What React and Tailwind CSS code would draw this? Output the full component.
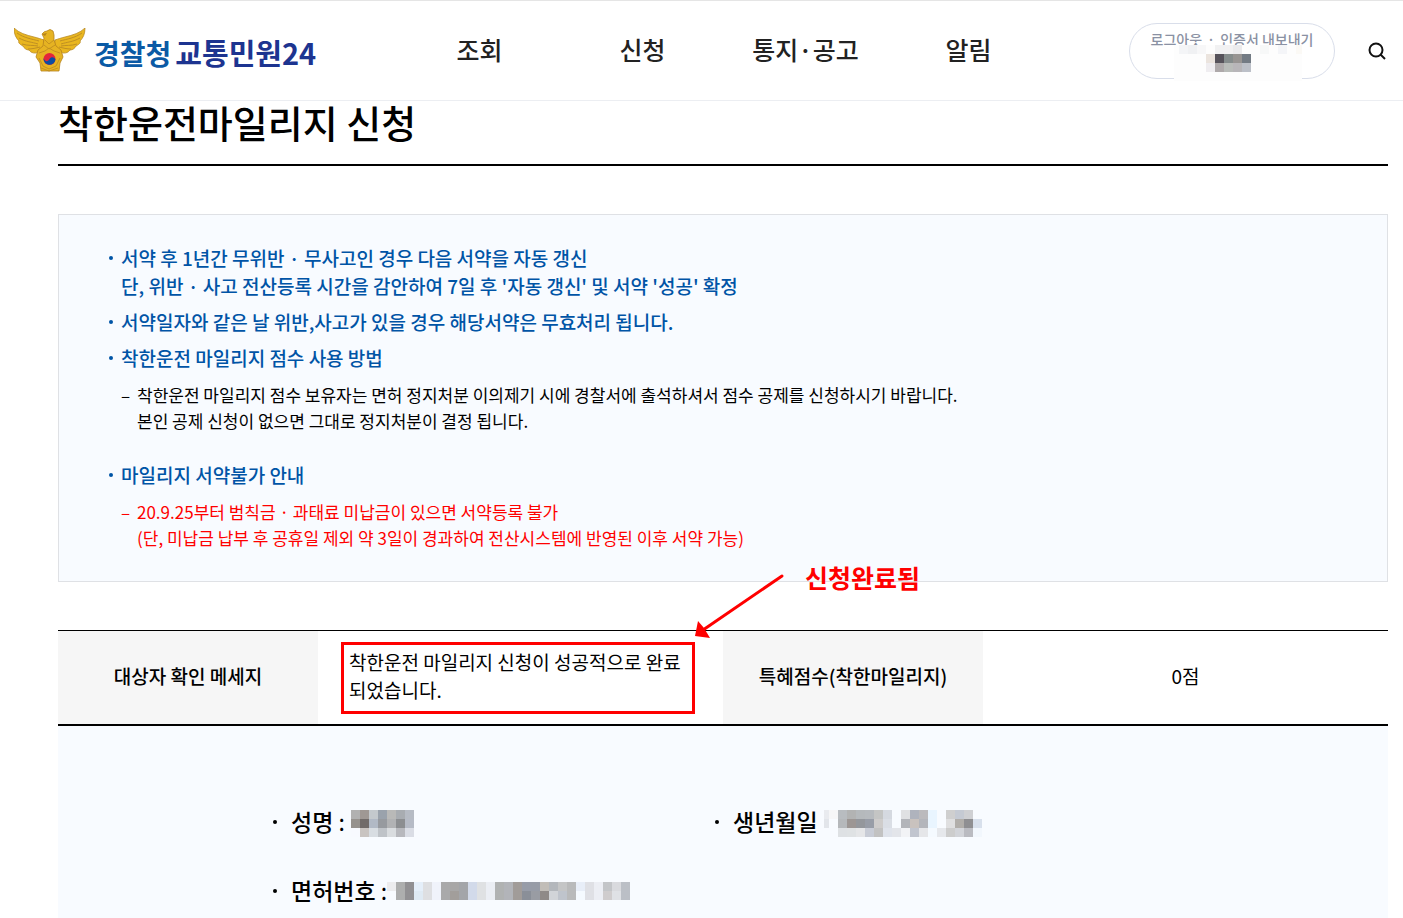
import React from 'react';

const MENU = ['조회', '신청', '통지·공고', '알림'];

// Colours of the masked values, one string per row of blocks ("-" is an empty block)
const MASKS = {
  user: [
    '- f4f5f7 f0f1f3 f7f7f8 - f1f1f2 f2f1f2 ebebed - - f7f8f8 - f4f5f8 - fbf9f5',
    '- - - - ebe4de 56525a 858c8c 979492 737b84 - - - - - -',
    '- - - - efedf0 aea9aa b9bcb9 b8b6b9 bcc0c8 - - - - - -',
  ],
  name: [
    'b1b1b1 9f9894 c4c9cd 9aa2ac b9b9b8 a8acb1 b6bbc4',
    '96928e 716b69 b1b9c5 979a9f b1b2b4 8c8e91 b6bbc6',
    'f8faff c9c4c1 d8dde2 bfc3c8 d9dcdf b7b8bd dadde5',
  ],
  birth: [
    'e9ebef f6f6f7 b8bcc0 b2b3b3 b5b9bc b6babe c4c5c4 d5d9e0 - e0e1e3 afb3bd bbbabd e9f5ff - cfcfcf c5cad3 cfd0d3 -',
    'e2e5ea - b5b8bb 9c9694 94979c 989da7 cecccb dadee5 - b3b5ba c9c2be b3b5bb e9f5ff - dfdfe0 b1aeaa 8f8f92 d8e0ec',
    '- - dee1e4 dfe2e4 e5e6e8 c8ccd6 c2c2c2 dfe3eb e3e5ea f2f3f6 c1c5cf e5e6e9 f5faff e6e8ec cdcdcd d2d4d9 babbc1 f2f7fd',
  ],
  license: [
    'ececee adaeae 919093 e5effa dedfe2 f0f3fb a9a9aa a8a7a7 a3a5a9 d2daea dfe1e3 ebeef4 b0b2b2 b2b4b9 a19c99 979ca8 979ca7 c1bdb8 b3b7bc c4c5c6 b9babb e8eef8 dfe0e5 eceef4 c3c5c8 d9dade bbbfc6',
    '- adaeae 919093 dfeaf4 dedfe2 f0f3fb a9a9aa a29e9b a3a5a9 d2daea dfe1e3 ebeef4 b0b2b2 b2b4b9 a19c99 8a8f98 999ca3 8f8a88 d1d4d8 bfc4cc b9babb f5faff dfe0e5 eceef4 cfcccd dfe1e5 bbbfc6',
  ],
};

// cropLeft hides that many pixels of the first column of blocks
const Mosaic = ({ rows, label, cropLeft = 0 }) => {
  const cells = rows.map((row) => row.split(' '));
  const width = cells[0].length * 9 - cropLeft;
  const height = rows.length * 9;
  return (
    <svg
      role="img"
      aria-label={label}
      className="shrink-0"
      width={width}
      height={height}
      viewBox={`${cropLeft} 0 ${width} ${height}`}
      shapeRendering="crispEdges"
    >
      {cells.map((row, y) =>
        row.map((color, x) =>
          color === '-' ? null : (
            <rect key={`${x}-${y}`} x={x * 9} y={y * 9} width="9" height="9" fill={`#${color}`} />
          )
        )
      )}
    </svg>
  );
};

const Wing = () => (
  <g>
    <path
      d="M30 12C27 11 24 10 20 9C12 7 5 5 0 0C0 6 2 10 5 13C4 14 5 16 9 18C10 20 12 22 15 22C17 25 21 26 25 24L31 22Z"
      fill="#e9b61f"
      stroke="#b98a24"
      strokeWidth="0.8"
    />
    <path
      d="M3 5C10 10 18 11 25 13M5 10C12 14 18 14 24 16M8 16C14 18 19 17 24 18M14 21C18 21 22 20 26 19"
      fill="none"
      stroke="#b98a24"
      strokeWidth="0.9"
    />
  </g>
);

// Golden eagle carrying the taegeuk
const Emblem = () => (
  <svg width="72" height="45" viewBox="0 0 72 45" aria-hidden="true">
    <Wing />
    <g transform="matrix(-1 0 0 1 71 0)">
      <Wing />
    </g>
    <path
      d="M24 22L29 18L30 10L28 6Q30 3 33 3Q36 0 39 3L40 7L40 12L42 18L47 22L49 29L46 35L45 43H27L26 35L22 29Z"
      fill="#e6b322"
      stroke="#b5821c"
      strokeWidth="0.8"
    />
    <path d="M28 6L33 5L31 8Z" fill="#b5821c" />
    <path
      d="M31 12L35 16L40 12M30 17L35 21L41 17M25 25L31 23L35 20L40 23L46 25M25 30L29 38L35 41L42 38L46 30M27 40L35 43L44 40"
      fill="none"
      stroke="#c08f20"
      strokeWidth="0.9"
    />
    <circle cx="35.500" cy="31" r="6" fill="#e3263b" />
    <path d="M29.500 30C31 34 34 34 35.500 31S41 29 41.500 31.500A6 6 0 0 1 29.500 30Z" fill="#0c4da2" />
  </svg>
);

const Header = () => (
  <header className="flex h-[101px] items-center border-t border-b border-t-[#e5e5e5] border-b-[#eceef2]">
    <a href="#home" className="ml-[14px] flex w-[384px] shrink-0 items-center gap-2">
      <Emblem />
      <span className="flex items-baseline gap-1 pt-1 text-[28px] leading-8 font-bold whitespace-nowrap">
        <span className="text-[#0b5aa5]">경찰청</span>
        <span className="text-[29px] text-[#1d3490]">교통민원24</span>
      </span>
    </a>
    <nav className="flex pb-1">
      {MENU.map((label) => (
        <a
          key={label}
          href="#menu"
          className="w-[163px] shrink-0 text-center text-[25px] leading-8 font-medium whitespace-nowrap text-[#222]"
        >
          {label}
        </a>
      ))}
    </nav>
    <div className="relative ml-auto flex h-14 w-[206px] shrink-0 justify-center rounded-full border border-[#d9deea] pt-[5px] text-sm font-medium whitespace-nowrap text-[#8a91a3]">
      <a href="#logout">로그아웃</a>
      <span className="mx-[5px]">·</span>
      <a href="#cert">인증서 내보내기</a>
      <div className="absolute top-[21px] left-11 flex h-9 w-32 items-start overflow-hidden bg-[#fdfdfd]">
        <Mosaic rows={MASKS.user} label="사용자 이름" cropLeft={4} />
      </div>
    </div>
    <button type="button" aria-label="검색" className="mr-4 ml-8 shrink-0">
      <svg width="20" height="20" viewBox="0 0 20 20" fill="none" stroke="#111" strokeWidth="2">
        <circle cx="9" cy="9" r="6.500" />
        <path d="M13.500 13.500L18 18" />
      </svg>
    </button>
  </header>
);

const Notice = ({ children }) => (
  <div className="flex text-[19px] leading-7 font-medium text-[#0054a6]">
    <span className="flex h-7 w-3 shrink-0 items-center">
      <span className="size-1 rounded-full bg-[#0054a6]" />
    </span>
    <p>{children}</p>
  </div>
);

const SubNotice = ({ children }) => (
  <div className="mt-2.5 ml-3 flex text-[17px] leading-[26px]">
    <span className="w-4 shrink-0">–</span>
    <p>{children}</p>
  </div>
);

const Guide = () => (
  <ul className="mt-12 border border-[#dfe1e5] bg-[#f8fbff] px-[50px] pt-[29px] pb-[30px]">
    <li>
      <Notice>
        서약 후 1년간 무위반 · 무사고인 경우 다음 서약을 자동 갱신
        <br />
        단, 위반 · 사고 전산등록 시간을 감안하여 7일 후 '자동 갱신' 및 서약 '성공' 확정
      </Notice>
    </li>
    <li className="mt-2">
      <Notice>서약일자와 같은 날 위반,사고가 있을 경우 해당서약은 무효처리 됩니다.</Notice>
    </li>
    <li className="mt-2">
      <Notice>착한운전 마일리지 점수 사용 방법</Notice>
      <SubNotice>
        착한운전 마일리지 점수 보유자는 면허 정지처분 이의제기 시에 경찰서에 출석하셔서 점수 공제를 신청하시기 바랍니다.
        <br />
        본인 공제 신청이 없으면 그대로 정지처분이 결정 됩니다.
      </SubNotice>
    </li>
    <li className="mt-[27px] text-[#ff0000]">
      <Notice>마일리지 서약불가 안내</Notice>
      <SubNotice>
        20.9.25부터 범칙금 · 과태료 미납금이 있으면 서약등록 불가
        <br />
        (단, 미납금 납부 후 공휴일 제외 약 3일이 경과하여 전산시스템에 반영된 이후 서약 가능)
      </SubNotice>
    </li>
  </ul>
);

// Hand-placed callout pointing at the result message
const Callout = () => (
  <div className="pointer-events-none absolute -top-[68px] left-[636px] flex text-[#ff0000]">
    <svg width="90" height="78" viewBox="0 0 90 78" aria-hidden="true">
      <path d="M88 14L9 68" stroke="#ff0000" strokeWidth="3" strokeLinecap="round" />
      <path d="M1 74L4 59L10 66L16 76Z" fill="#ff0000" />
    </svg>
    <strong className="ml-[21px] text-[25px] leading-[30px] font-bold whitespace-nowrap">신청완료됨</strong>
  </div>
);

const Result = () => (
  <div className="relative mt-12">
    <table className="w-full table-fixed border-t border-b-2 border-black text-[19px] leading-7">
      <tbody>
        <tr>
          <th scope="row" className="w-[260px] bg-[#f6f6f6] pb-1 font-medium">대상자 확인 메세지</th>
          <td className="pt-[11px] pr-7 pb-2.5 pl-[23px]">
            <div className="border-3 border-[#ff0000] px-[5px] pt-[3px] pb-[7px]">
              착한운전 마일리지 신청이 성공적으로 완료되었습니다.
            </div>
          </td>
          <th scope="row" className="w-[260px] bg-[#f6f6f6] pb-1 font-medium">특혜점수(착한마일리지)</th>
          <td className="pb-1 text-center">0점</td>
        </tr>
      </tbody>
    </table>
    <Callout />
  </div>
);

const Field = ({ label, colon, valueClass, children }) => (
  <div className="flex h-[33px] items-center whitespace-nowrap">
    <span className="mr-3.5 size-1 shrink-0 rounded-full bg-black" />
    <dt className="text-[23px] leading-[33px] font-medium">
      {label}
      {colon && <span className="font-normal"> :</span>}
    </dt>
    <dd className={valueClass}>{children}</dd>
  </div>
);

const Applicant = () => (
  <dl className="grid grid-cols-2 gap-y-9 bg-[#f8fbff] pt-[79px] pr-[231px] pb-3 pl-[215px]">
    <Field label="성명" colon valueClass="mt-1 ml-1.5">
      <Mosaic rows={MASKS.name} label="성명" />
    </Field>
    <Field label="생년월일" valueClass="mt-1 ml-1.5">
      <Mosaic rows={MASKS.birth} label="생년월일" cropLeft={4} />
    </Field>
    <Field label="면허번호" colon>
      <Mosaic rows={MASKS.license} label="면허번호" />
    </Field>
  </dl>
);

const App = () => (
  <div className="bg-white font-['Noto_Sans_CJK_KR',sans-serif] text-black">
    <Header />
    <main className="mr-[15px] ml-[58px]">
      <h1 className="border-b-2 border-black pb-[22px] text-[38px] leading-[41px] font-medium">
        착한운전마일리지 신청
      </h1>
      <Guide />
      <Result />
      <Applicant />
    </main>
  </div>
);

export default App;
